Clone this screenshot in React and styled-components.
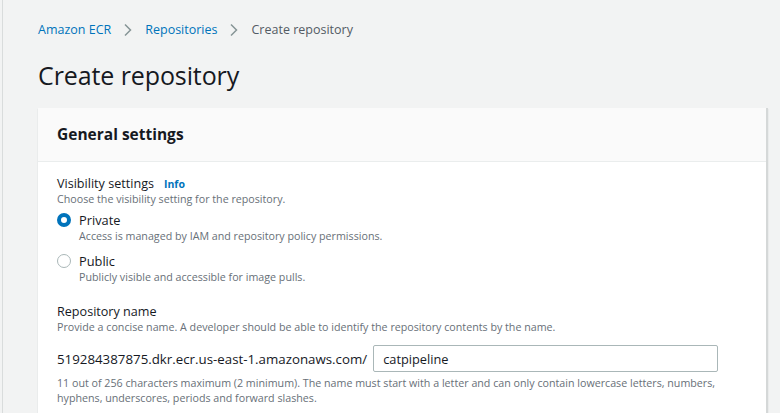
import React from 'react';
import styled, { createGlobalStyle } from 'styled-components';

const GlobalStyle = createGlobalStyle`
  html, body {
    margin: 0;
    padding: 0;
    background: #f2f3f3;
    font-family: "Open Sans", "Noto Sans", Arial, sans-serif;
    color: #16191f;
    overflow: hidden;
  }
`;

const Shell = styled.div`
  height: 413px;
  margin-left: 2px;
  border-left: 1px solid #d9dcdc;
  padding: 19px 12px 0 35px;
  box-sizing: border-box;
  overflow: hidden;
`;

const Crumbs = styled.nav`
  display: flex;
  align-items: center;
  gap: 12px;
  font-size: 12.5px;
  line-height: 22px;
`;

const Crumb = styled.span`
  color: ${p => (p.$current ? '#545b64' : '#0073bb')};
`;

const Sep = styled.span`
  display: flex;
  align-items: center;
  color: #879596;
`;

const Title = styled.h1`
  margin: 17px 0 0;
  font-size: 25px;
  font-weight: 400;
  line-height: 34px;
  letter-spacing: -0.1px;
`;

const Card = styled.section`
  margin-top: 16px;
  background: #fff;
  border-right: 2px solid #d5d8d8;
  box-shadow: 0 1px 1px rgba(0, 28, 36, 0.2);
`;

const CardHeader = styled.header`
  background: #fafafa;
  border-bottom: 1px solid #eaeded;
  padding: 13px 19px 14px;
  font-size: 15.5px;
  font-weight: 700;
  line-height: 26px;
`;

const CardBody = styled.div`
  padding: 14px 19px 20px;
`;

const Field = styled.div`
  & + & {
    margin-top: 19px;
  }
`;

const Label = styled.div`
  display: flex;
  align-items: baseline;
  gap: 10px;
  font-size: 12.6px;
  line-height: 16px;
`;

const Info = styled.span`
  color: #0073bb;
  font-size: 10.5px;
  font-weight: 700;
`;

const Desc = styled.div`
  color: #687078;
  font-size: 10.7px;
  line-height: 15px;
`;

const RadioRow = styled.label`
  display: grid;
  grid-template-columns: 14px 1fr;
  column-gap: 8px;
  margin-top: ${p => p.$gap}px;
`;

const RadioDot = styled.span`
  width: 14px;
  height: 14px;
  margin-top: 2px;
  border-radius: 50%;
  box-sizing: border-box;
  border: ${p => (p.$checked ? '4px solid #0073bb' : '1.5px solid #aab7b8')};
  background: #fff;
`;

const RadioTitle = styled.div`
  font-size: 12.8px;
  line-height: 18px;
`;

const Prefix = styled.span`
  font-size: 13.3px;
  white-space: nowrap;
`;

const InputRow = styled.div`
  display: flex;
  align-items: center;
  gap: 6px;
  margin-top: 10px;
`;

const TextInput = styled.div`
  width: 345px;
  height: 27px;
  box-sizing: border-box;
  border: 1px solid #aab7b8;
  border-radius: 2px;
  padding: 0 9px;
  display: flex;
  align-items: center;
  font-size: 12.8px;
`;

const Hint = styled(Desc)`
  margin-top: 4px;
  width: 670px;
`;

const Chevron = () => (
  <svg width="10" height="14" viewBox="0 0 10 14" fill="none">
    <path d="M2 1.5 L7.5 7 L2 12.5" stroke="currentColor" strokeWidth="1.5" />
  </svg>
);

const Radio = ({ checked, title, desc, gap }) => (
  <RadioRow $gap={gap}>
    <RadioDot $checked={checked} />
    <div>
      <RadioTitle>{title}</RadioTitle>
      <Desc>{desc}</Desc>
    </div>
  </RadioRow>
);

export default function App() {
  return (
    <>
      <GlobalStyle />
      <Shell>
        <Crumbs>
          <Crumb>Amazon ECR</Crumb>
          <Sep><Chevron /></Sep>
          <Crumb>Repositories</Crumb>
          <Sep><Chevron /></Sep>
          <Crumb $current>Create repository</Crumb>
        </Crumbs>
        <Title>Create repository</Title>
        <Card>
          <CardHeader>General settings</CardHeader>
          <CardBody>
            <Field>
              <Label>Visibility settings <Info>Info</Info></Label>
              <Desc>Choose the visibility setting for the repository.</Desc>
              <Radio
                checked
                gap={4}
                title="Private"
                desc="Access is managed by IAM and repository policy permissions."
              />
              <Radio
                gap={8}
                title="Public"
                desc="Publicly visible and accessible for image pulls."
              />
            </Field>
            <Field>
              <Label>Repository name</Label>
              <Desc>Provide a concise name. A developer should be able to identify the repository contents by the name.</Desc>
              <InputRow>
                <Prefix>519284387875.dkr.ecr.us-east-1.amazonaws.com/</Prefix>
                <TextInput>catpipeline</TextInput>
              </InputRow>
              <Hint>
                11 out of 256 characters maximum (2 minimum). The name must start with a letter and can only contain lowercase letters, numbers, hyphens, underscores, periods and forward slashes.
              </Hint>
            </Field>
          </CardBody>
        </Card>
      </Shell>
    </>
  );
}
